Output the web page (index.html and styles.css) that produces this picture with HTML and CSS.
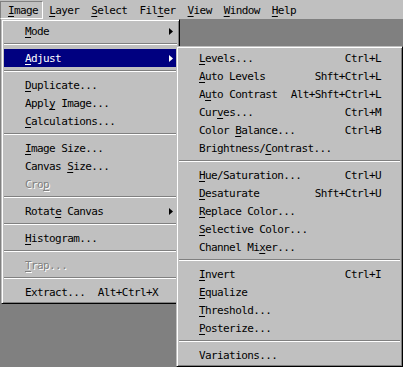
FILE: index.html
```html
<!DOCTYPE html>
<html>
<head>
<meta charset="utf-8">
<link rel="stylesheet" href="styles.css">
</head>
<body>
<div class="bar">
  <span class="bar-item pressed"><u>I</u>mage</span>
  <span class="bar-item"><u>L</u>ayer</span>
  <span class="bar-item"><u>S</u>elect</span>
  <span class="bar-item">Fil<u>t</u>er</span>
  <span class="bar-item"><u>V</u>iew</span>
  <span class="bar-item"><u>W</u>indow</span>
  <span class="bar-item"><u>H</u>elp</span>
</div>
<div class="desk">
  <div class="menu image-menu">
    <div class="item"><span class="label"><u>M</u>ode</span><svg class="arrow" width="4" height="7" viewBox="0 0 4 7"><polygon points="0,0 4,3.5 0,7"/></svg></div>
    <div class="sep"></div>
    <div class="item active"><span class="label"><u>A</u>djust</span><svg class="arrow" width="4" height="7" viewBox="0 0 4 7"><polygon points="0,0 4,3.5 0,7"/></svg></div>
    <div class="sep"></div>
    <div class="item"><span class="label"><u>D</u>uplicate...</span></div>
    <div class="item"><span class="label">Appl<u>y</u> Image...</span></div>
    <div class="item"><span class="label"><u>C</u>alculations...</span></div>
    <div class="sep"></div>
    <div class="item"><span class="label"><u>I</u>mage Size...</span></div>
    <div class="item"><span class="label">Canvas <u>S</u>ize...</span></div>
    <div class="item disabled"><span class="label">Cro<u>p</u></span></div>
    <div class="sep"></div>
    <div class="item"><span class="label">Rotat<u>e</u> Canvas</span><svg class="arrow" width="4" height="7" viewBox="0 0 4 7"><polygon points="0,0 4,3.5 0,7"/></svg></div>
    <div class="sep"></div>
    <div class="item"><span class="label"><u>H</u>istogram...</span></div>
    <div class="sep"></div>
    <div class="item disabled"><span class="label"><u>T</u>rap...</span></div>
    <div class="sep"></div>
    <div class="item"><span class="label">Extract...</span><span class="key">Alt+Ctrl+X</span></div>
  </div>
  <div class="menu sub-menu">
    <div class="item"><span class="label"><u>L</u>evels...</span><span class="key">Ctrl+L</span></div>
    <div class="item"><span class="label"><u>A</u>uto Levels</span><span class="key">Shft+Ctrl+L</span></div>
    <div class="item"><span class="label">A<u>u</u>to Contrast</span><span class="key">Alt+Shft+Ctrl+L</span></div>
    <div class="item"><span class="label">Cur<u>v</u>es...</span><span class="key">Ctrl+M</span></div>
    <div class="item"><span class="label">Color <u>B</u>alance...</span><span class="key">Ctrl+B</span></div>
    <div class="item"><span class="label">Brightness/<u>C</u>ontrast...</span></div>
    <div class="sep"></div>
    <div class="item"><span class="label"><u>H</u>ue/Saturation...</span><span class="key">Ctrl+U</span></div>
    <div class="item"><span class="label"><u>D</u>esaturate</span><span class="key">Shft+Ctrl+U</span></div>
    <div class="item"><span class="label"><u>R</u>eplace Color...</span></div>
    <div class="item"><span class="label"><u>S</u>elective Color...</span></div>
    <div class="item"><span class="label">Channel Mi<u>x</u>er...</span></div>
    <div class="sep"></div>
    <div class="item"><span class="label"><u>I</u>nvert</span><span class="key">Ctrl+I</span></div>
    <div class="item"><span class="label"><u>E</u>qualize</span></div>
    <div class="item"><span class="label"><u>T</u>hreshold...</span></div>
    <div class="item"><span class="label"><u>P</u>osterize...</span></div>
    <div class="sep"></div>
    <div class="item"><span class="label">Variations...</span></div>
  </div>
</div>
</body>
</html>
```

FILE: styles.css
```css
html, body {
  margin: 0;
  padding: 0;
}
body {
  width: 403px;
  height: 367px;
  overflow: hidden;
  background: #808080;
  font-family: "DejaVu Sans Mono", "Liberation Mono", monospace;
  font-size: 11px;
  letter-spacing: -0.6px;
  color: #000;
  display: flex;
  flex-direction: column;
}
u {
  text-decoration: underline;
  text-decoration-thickness: 1px;
  text-underline-offset: 2px;
}
.bar {
  height: 19px;
  box-sizing: border-box;
  padding-top: 1px;
  background: #c0c0c0;
  display: flex;
  flex: none;
}
.bar-item {
  height: 18px;
  box-sizing: border-box;
  line-height: 18px;
  padding: 1px 6px 0;
  white-space: nowrap;
}
.bar-item.pressed {
  line-height: 16px;
  padding: 1px 4px 0 7px;
  border-style: solid;
  border-width: 1px;
  border-color: #808080 #fff #fff #808080;
}
.desk {
  flex: 1;
  position: relative;
}
.menu {
  position: absolute;
  box-sizing: border-box;
  background: #c0c0c0;
  border: 1px solid;
  border-color: #c0c0c0 #000 #000 #c0c0c0;
  box-shadow: inset 1px 1px #fff, inset -1px -1px #808080;
  padding: 2px;
  display: flex;
  flex-direction: column;
}
.image-menu {
  left: 1px;
  top: 0;
  width: 179px;
}
.sub-menu {
  left: 176px;
  top: 27px;
  width: 227px;
}
.item {
  height: 18px;
  box-sizing: border-box;
  line-height: 16px;
  padding-top: 2px;
  display: flex;
  align-items: center;
  white-space: nowrap;
  padding-right: 19px;
}
.image-menu .item {
  padding-left: 21px;
}
.sub-menu .item {
  padding-left: 20px;
}
.item .label {
  flex: 1;
}
.item .key {
  flex: none;
}
.item .arrow {
  fill: #000;
  margin-right: -15px;
  margin-top: -2px;
  flex: none;
}
.item.active {
  background: #000080;
  color: #fff;
}
.item.active .arrow {
  fill: #fff;
}
.item.disabled {
  color: #808080;
  text-shadow: 1px 1px 0 #fff;
}
.sep {
  height: 9px;
  box-sizing: border-box;
  padding-top: 3px;
  flex: none;
}
.sep::before {
  content: "";
  display: block;
  height: 1px;
  background: #808080;
  border-bottom: 1px solid #fff;
}
```
